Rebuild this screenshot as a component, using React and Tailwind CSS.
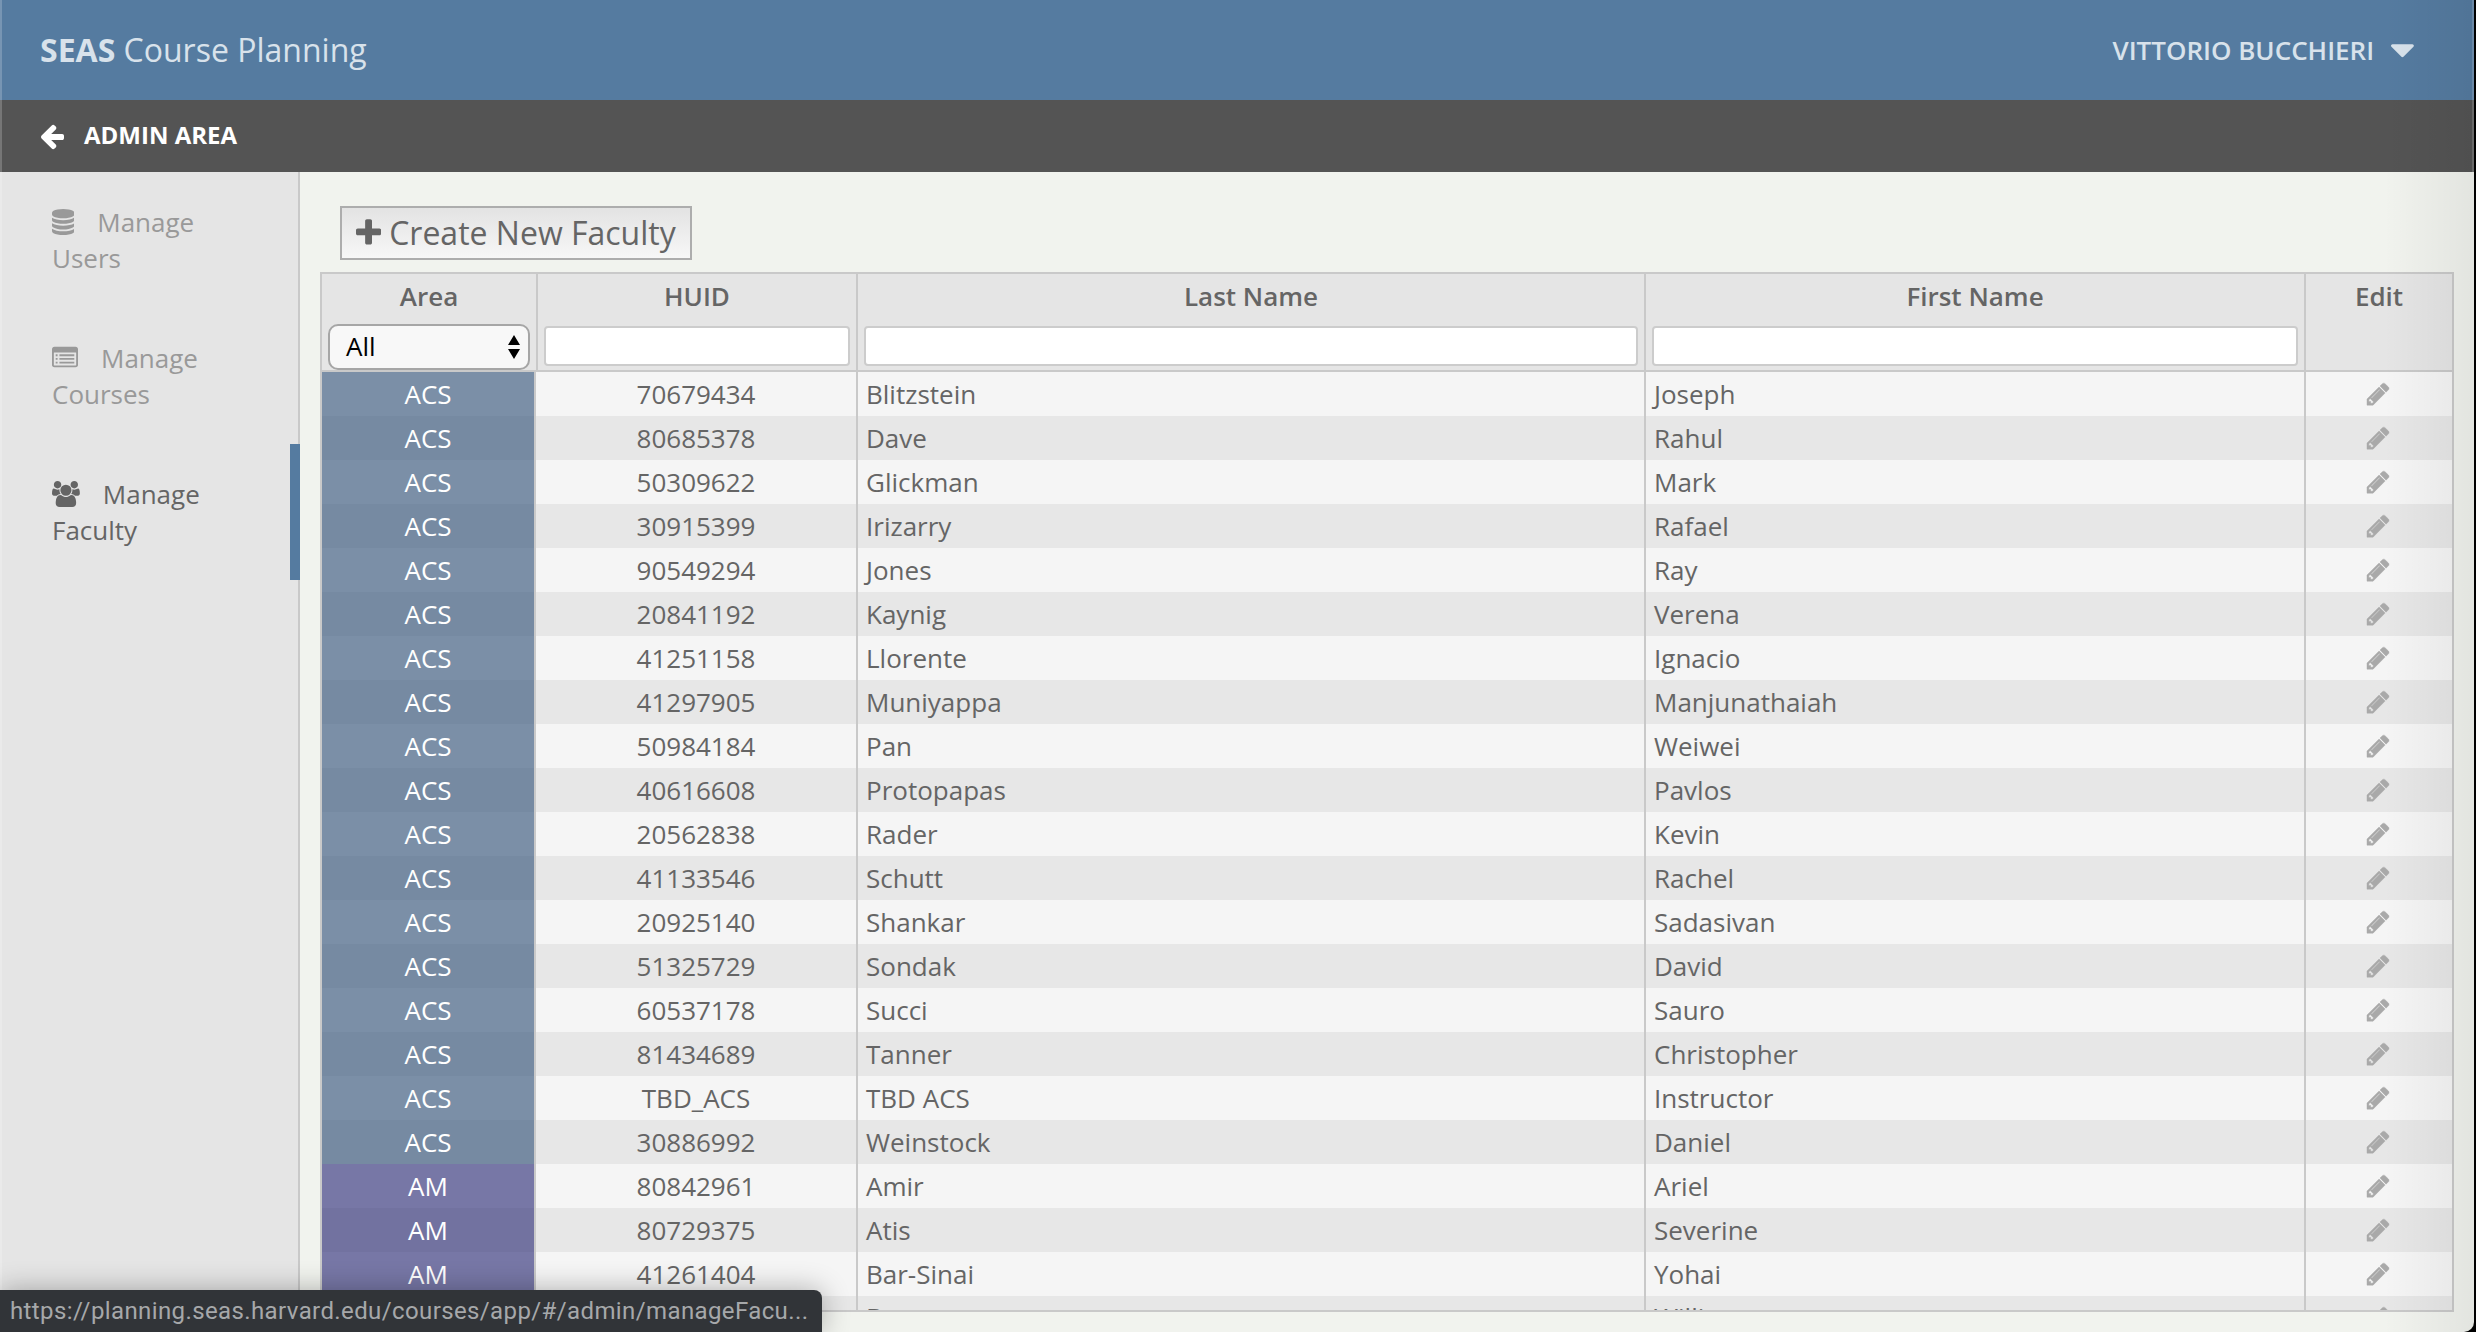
import React from "react";

const PATHS = {
  arrow: "M1536 640v128q0 53 -32.5 90.5t-84.5 37.5h-704l293 294q38 36 38 90t-38 90l-75 76q-37 37 -90 37q-52 0 -91 -37l-651 -652q-37 -37 -37 -90q0 -52 37 -91l651 -650q38 -38 91 -38q52 0 90 38l75 74q38 38 38 91t-38 91l-293 293h704q52 0 84.5 37.5t32.5 90.5z",
  pencil: "M363 0l91 91l-235 235l-91 -91v-107h128v-128h107zM886 928q0 22 -22 22q-10 0 -17 -7l-542 -542q-7 -7 -7 -17q0 -22 22 -22q10 0 17 7l542 542q7 7 7 17zM832 1120l416 -416l-832 -832h-416v416zM1515 1024q0 -53 -37 -90l-166 -166l-416 416l166 165q36 38 90 38q53 0 91 -38l235 -234q37 -39 37 -91z",
  plus: "M1408 800v-192q0 -40 -28 -68t-68 -28h-416v-416q0 -40 -28 -68t-68 -28h-192q-40 0 -68 28t-28 68v416h-416q-40 0 -68 28t-28 68v192q0 40 28 68t68 28h416v416q0 40 28 68t68 28h192q40 0 68 -28t28 -68v-416h416q40 0 68 -28t28 -68z",
  caret: "M1024 832q0 -26 -19 -45l-448 -448q-19 -19 -45 -19t-45 19l-448 448q-19 19 -19 45t19 45t45 19h896q26 0 45 -19t19 -45z",
  database: "M768 768q237 0 443 43t325 127v-170q0 -69 -103 -128t-280 -93.5t-385 -34.5t-385 34.5t-280 93.5t-103 128v170q119 -84 325 -127t443 -43zM768 0q237 0 443 43t325 127v-170q0 -69 -103 -128t-280 -93.5t-385 -34.5t-385 34.5t-280 93.5t-103 128v170q119 -84 325 -127t443 -43zM768 384q237 0 443 43t325 127v-170q0 -69 -103 -128t-280 -93.5t-385 -34.5t-385 34.5t-280 93.5t-103 128v170q119 -84 325 -127t443 -43zM768 1536q208 0 385 -34.5t280 -93.5t103 -128v-128q0 -69 -103 -128t-280 -93.5t-385 -34.5t-385 34.5t-280 93.5t-103 128v128q0 69 103 128t280 93.5t385 34.5z",
  list: "M256 256h128v128h-128zM256 512h128v128h-128zM256 768h128v128h-128zM512 256h1024v128h-1024zM512 512h1024v128h-1024zM512 768h1024v128h-1024zM1664 160v832q0 13 -9.5 22.5t-22.5 9.5h-1472q-13 0 -22.5 -9.5t-9.5 -22.5v-832q0 -13 9.5 -22.5t22.5 -9.5h1472q13 0 22.5 9.5t9.5 22.5zM1792 1248v-1088q0 -66 -47 -113t-113 -47h-1472q-66 0 -113 47t-47 113v1088q0 66 47 113t113 47h1472q66 0 113 -47t47 -113z",
  users: "M593 640q-162 -5 -265 -128h-134q-82 0 -138 40.5t-56 118.5q0 353 124 353q6 0 43.5 -21t97.5 -42.5t119 -21.5q67 0 133 23q-5 -37 -5 -66q0 -139 81 -256zM1664 3q0 -120 -73 -189.5t-194 -69.5h-874q-121 0 -194 69.5t-73 189.5q0 53 3.5 103.5t14 109t26.5 108.5t43 97.5t62 81t85.5 53.5t111.5 20q10 0 43 -21.5t73 -48t107 -48t135 -21.5t135 21.5t107 48t73 48t43 21.5q61 0 111.5 -20t85.5 -53.5t62 -81t43 -97.5t26.5 -108.5t14 -109t3.5 -103.5zM640 1280q0 -106 -75 -181t-181 -75t-181 75t-75 181t75 181t181 75t181 -75t75 -181zM1344 896q0 -159 -112.5 -271.5t-271.5 -112.5t-271.5 112.5t-112.5 271.5t112.5 271.5t271.5 112.5t271.5 -112.5t112.5 -271.5zM1920 671q0 -78 -56 -118.5t-138 -40.5h-134q-103 123 -265 128q81 117 81 256q0 29 -5 66q66 -23 133 -23q59 0 119 21.5t97.5 42.5t43.5 21q124 0 124 -353zM1792 1280q0 -106 -75 -181t-181 -75t-181 75t-75 181t75 181t181 75t181 -75t75 -181z",
};

// Font-style icon: 1792 units per em, y axis pointing up, baseline at 0.
function Icon({ name, units, size, className = "" }) {
  return (
    <svg
      className={className}
      width={(units * size) / 1792}
      height={size}
      viewBox={`0 0 ${units} 1792`}
      fill="currentColor"
      fillRule="evenodd"
      aria-hidden="true"
    >
      <g transform="translate(0 1536) scale(1 -1)">
        <path d={PATHS[name]} />
      </g>
    </svg>
  );
}

const ROWS = [
  ["ACS", "70679434", "Blitzstein", "Joseph"],
  ["ACS", "80685378", "Dave", "Rahul"],
  ["ACS", "50309622", "Glickman", "Mark"],
  ["ACS", "30915399", "Irizarry", "Rafael"],
  ["ACS", "90549294", "Jones", "Ray"],
  ["ACS", "20841192", "Kaynig", "Verena"],
  ["ACS", "41251158", "Llorente", "Ignacio"],
  ["ACS", "41297905", "Muniyappa", "Manjunathaiah"],
  ["ACS", "50984184", "Pan", "Weiwei"],
  ["ACS", "40616608", "Protopapas", "Pavlos"],
  ["ACS", "20562838", "Rader", "Kevin"],
  ["ACS", "41133546", "Schutt", "Rachel"],
  ["ACS", "20925140", "Shankar", "Sadasivan"],
  ["ACS", "51325729", "Sondak", "David"],
  ["ACS", "60537178", "Succi", "Sauro"],
  ["ACS", "81434689", "Tanner", "Christopher"],
  ["ACS", "TBD_ACS", "TBD ACS", "Instructor"],
  ["ACS", "30886992", "Weinstock", "Daniel"],
  ["AM", "80842961", "Amir", "Ariel"],
  ["AM", "80729375", "Atis", "Severine"],
  ["AM", "41261404", "Bar-Sinai", "Yohai"],
  ["AM", "", "Bossert", "William"],
];

const AREA = {
  ACS: ["bg-[#7b8fa7]", "bg-[#768aa2]"],
  AM: ["bg-[#7777a6]", "bg-[#7272a0]"],
};

function NavItem({ icon, units, first, second, active }) {
  return (
    <div className={`flex h-[136px] justify-between ${active ? "text-[#656565]" : "text-[#999999]"}`}>
      <div className="pt-8 pl-[52px] text-[26px] leading-9">
        <div className="flex items-center">
          <Icon name={icon} units={units} size={26} />
          <span className="ml-[23px]">{first}</span>
        </div>
        <div>{second}</div>
      </div>
      {active && <div className="-mr-0.5 w-[10px] bg-[#557ba0]" />}
    </div>
  );
}

function HeadCell({ label, width, children }) {
  return (
    <div className={`${width} box-border h-[96px] shrink-0 border-r-2 border-[#c9c9c9]`}>
      <div className="pt-[4px] text-center font-semibold leading-[36px]">{label}</div>
      {children}
    </div>
  );
}

function FilterInput() {
  return <div className="mx-1.5 mt-[12px] h-10 rounded-[4px] border-2 border-[#cccccc] bg-white" />;
}

export default function App() {
  return (
    <div className="relative flex h-[1332px] w-[2476px] flex-col overflow-hidden bg-black font-['Open_Sans',sans-serif] text-[26px] text-[#656565]">
      <div className="flex w-[2474px] grow flex-col overflow-hidden rounded-br-[10px] bg-[#f1f3ee]">
        <header className="flex h-[100px] shrink-0 items-center justify-between bg-[#557ba0] pr-[60px] pl-10 text-[#d8e2eb]">
          <div className="text-[32px]">
            <span className="font-bold">SEAS</span> Course Planning
          </div>
          <div className="flex items-center">
            <span className="font-semibold">VITTORIO BUCCHIERI</span>
            <Icon name="caret" units={1024} size={40} className="mb-px ml-[17px]" />
          </div>
        </header>
        <div className="flex h-[72px] shrink-0 items-center bg-[#545454] pl-10 text-white">
          <Icon name="arrow" units={1536} size={28} className="mt-[3px]" />
          <span className="mb-0.5 ml-5 text-[24px] font-bold">ADMIN AREA</span>
        </div>
        <div className="flex grow">
          <nav className="w-[300px] shrink-0 border-r-2 border-[#c9c9c9] bg-[#e5e5e5]">
            <NavItem icon="database" units={1536} first="Manage" second="Users" />
            <NavItem icon="list" units={1792} first="Manage" second="Courses" />
            <NavItem icon="users" units={1920} first="Manage" second="Faculty" active />
          </nav>
          <main className="pt-[34px] pl-5">
            <button className="ml-5 flex h-[54px] w-[352px] items-center border-2 border-[#adadad] bg-linear-to-b from-[#e3e3e3] to-[#f7f7f7] pl-3.5 text-[32px]">
              <Icon name="plus" units={1408} size={32} />
              <span className="ml-2 whitespace-nowrap">Create New Faculty</span>
            </button>
            <div className="mt-3 h-[1040px] w-[2134px] overflow-hidden border-2 border-[#c9c9c9]">
              <div className="flex h-[98px] border-b-2 border-[#c9c9c9] bg-[#e5e5e5]">
                <HeadCell label="Area" width="w-[216px]">
                  <div className="mx-1.5 mt-2.5 flex h-[46px] items-center justify-between rounded-[10px] border-2 border-[#a6a6a6] bg-[#f8f8f8] pr-2 pl-4 text-black">
                    <span className="pb-0.5">All</span>
                    <svg width="12" height="24" viewBox="0 0 12 24">
                      <path d="M6 0l6 10H0zM6 24l6-10H0z" />
                    </svg>
                  </div>
                </HeadCell>
                <HeadCell label="HUID" width="w-[320px]"><FilterInput /></HeadCell>
                <HeadCell label="Last Name" width="w-[788px]"><FilterInput /></HeadCell>
                <HeadCell label="First Name" width="w-[660px]"><FilterInput /></HeadCell>
                <div className="grow pt-[4px] text-center font-semibold leading-[36px]">Edit</div>
              </div>
              {ROWS.map(([area, id, last, first], i) => (
                <div key={i} className={`flex h-11 ${i === 21 ? "leading-[42px]" : "leading-[44px]"} ${i % 2 ? "bg-[#e7e7e7]" : "bg-[#f5f5f5]"}`}>
                  <div className={`w-[214px] shrink-0 border-r-2 border-[#c9c9c9] text-center text-white ${AREA[area][i % 2]}`}>{area}</div>
                  <div className="w-[322px] shrink-0 border-r-2 border-[#c9c9c9] text-center">{id}</div>
                  <div className="w-[788px] shrink-0 border-r-2 border-[#c9c9c9] pl-2">{last}</div>
                  <div className="w-[660px] shrink-0 border-r-2 border-[#c9c9c9] pl-2">{first}</div>
                  <div className="flex grow items-center justify-center pr-px text-[#a9a9a9]">
                    <Icon name="pencil" units={1536} size={26} className="overflow-visible stroke-current [stroke-width:32]" />
                  </div>
                </div>
              ))}
            </div>
          </main>
        </div>
      </div>
      <div className="absolute inset-y-0 left-0 w-0.5 bg-white/20" />
      <div className="absolute inset-y-0 right-0.5 w-[90px] bg-linear-to-r from-transparent to-black/6" />
      <div className="absolute top-0 right-0.5 h-[172px] w-0.5 bg-white/15" />
      <div className="absolute bottom-0 left-0 flex h-[42px] w-[822px] items-center rounded-tr-[8px] bg-[#313438] pl-2.5 font-[Roboto,sans-serif] text-[24px] tracking-[0.39px] text-[#a6a8aa] shadow-[0_0_28px_rgba(0,0,0,0.3)]">
        https://planning.seas.harvard.edu/courses/app/#/admin/manageFacu...
      </div>
    </div>
  );
}
